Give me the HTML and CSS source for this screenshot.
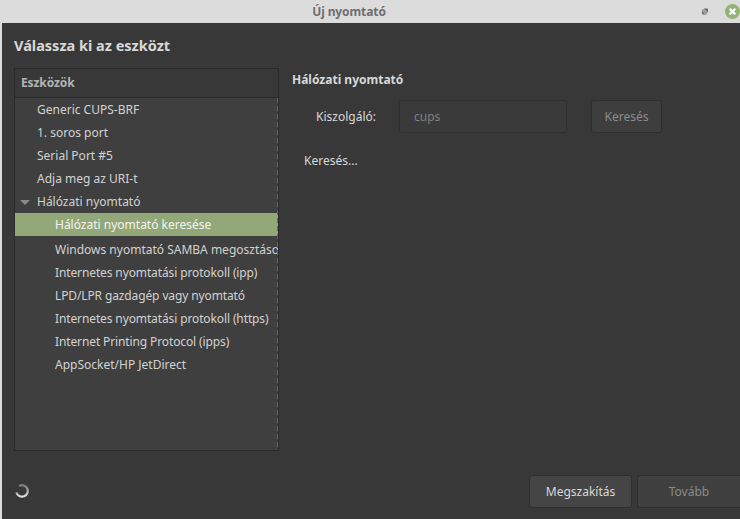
FILE: index.html
```html
<!DOCTYPE html>
<html lang="hu">
<head>
<meta charset="utf-8">
<title>Új nyomtató</title>
<link rel="stylesheet" href="styles.css">
</head>
<body>
<div class="window">
  <header class="titlebar">
    <span class="title">Új nyomtató</span>
    <span class="controls">
      <svg class="restore" width="7" height="7" viewBox="0 0 7 7"><path d="M0 1H3L6 4V7H3L0 4Z" fill="#a0a0a0"/><path d="M2 0H7V5Z M0 3L4 7H0Z" fill="#6e6e6e"/></svg>
      <svg class="close" width="15" height="15" viewBox="0 0 15 15"><circle cx="7.5" cy="7.5" r="7.5" fill="#92b372"/><path d="M4.7 4.7L10.3 10.3M10.3 4.7L4.7 10.3" stroke="#fff" stroke-width="2.2"/></svg>
    </span>
  </header>
  <main class="content">
    <h1 class="heading">Válassza ki az eszközt</h1>
    <div class="columns">
      <section class="panel">
        <div class="panel-head">Eszközök</div>
        <ul class="tree">
          <li class="row">Generic CUPS-BRF</li>
          <li class="row">1. soros port</li>
          <li class="row">Serial Port #5</li>
          <li class="row">Adja meg az URI-t</li>
          <li class="row"><span class="arrow"></span>Hálózati nyomtató</li>
          <li class="row sub selected">Hálózati nyomtató keresése</li>
          <li class="row sub">Windows nyomtató SAMBA megosztáson</li>
          <li class="row sub tight">Internetes nyomtatási protokoll (ipp)</li>
          <li class="row sub tight">LPD/LPR gazdagép vagy nyomtató</li>
          <li class="row sub tight">Internetes nyomtatási protokoll (https)</li>
          <li class="row sub tight">Internet Printing Protocol (ipps)</li>
          <li class="row sub">AppSocket/HP JetDirect</li>
        </ul>
      </section>
      <section class="detail">
        <h2 class="detail-title">Hálózati nyomtató</h2>
        <div class="form">
          <span class="label">Kiszolgáló:</span>
          <span class="input">cups</span>
          <span class="btn search">Keresés</span>
        </div>
        <p class="status">Keresés...</p>
      </section>
    </div>
    <footer class="footer">
      <svg class="spinner" width="14" height="14" viewBox="0 0 14 14"><defs><linearGradient id="g" x1="0" y1="0" x2="0" y2="1"><stop offset="0" stop-color="#777"/><stop offset="1" stop-color="#e0e0e0"/></linearGradient></defs><path d="M4 1.9A5.8 5.8 0 1 1 1.4 8.5" fill="none" stroke="url(#g)" stroke-width="2.2"/></svg>
      <span class="actions">
        <span class="btn cancel">Megszakítás</span>
        <span class="btn next">Tovább</span>
      </span>
    </footer>
  </main>
</div>
</body>
</html>
```
FILE: styles.css
```css
* { box-sizing: border-box; }
html, body { margin: 0; padding: 0; }
body { width: 740px; height: 519px; overflow: hidden; background: #dcdcdc; font-family: "Noto Sans", sans-serif; font-size: 12px; color: #d8d8d8; }
.window { display: flex; flex-direction: column; height: 519px; }
.titlebar { height: 23px; flex: none; display: flex; align-items: center; justify-content: center; padding-right: 42px; background: #dcdcdc; position: relative; }
.title { font-size: 12px; font-weight: 700; color: #6e6e6e; letter-spacing: -0.1px; }
.controls { position: absolute; right: 0; top: 0; height: 23px; width: 40px; display: flex; align-items: center; }
.restore { margin-left: 2px; }
.close { margin-left: 17px; flex: none; }
.content { flex: 1; margin-left: 2px; background: #383838; padding: 0 0 0 12px; display: flex; flex-direction: column; min-height: 0; }
.heading { margin: 12px 0 0; font-size: 14.5px; line-height: 20px; font-weight: 700; color: #d8d8d8; }
.columns { display: flex; margin-top: 13px; height: 383px; flex: none; }
.panel { width: 265px; flex: none; border: 1px solid #2a2a2a; background: #3f3f3f; display: flex; flex-direction: column; }
.panel-head { height: 29px; flex: none; padding: 0 0 2px 6px; display: flex; align-items: center; background: #383838; border-bottom: 1px solid #2a2a2a; font-weight: 700; color: #b4b4b4; letter-spacing: -0.1px; }
.tree { list-style: none; margin: 0; padding: 0; flex: 1; overflow: hidden; position: relative; }
.tree::after { content: ""; position: absolute; right: 0; top: 0; bottom: 0; width: 1px; background: repeating-linear-gradient(to bottom, #666 0, #666 5px, transparent 5px, transparent 8px); }
.row { height: 23px; line-height: 23px; padding-left: 22px; white-space: nowrap; position: relative; color: #d2d2d2; overflow: hidden; }
.row.sub { padding-left: 40px; }
.row.tight { letter-spacing: -0.12px; }
.row.selected { background: #92a878; color: #f4f4f4; margin-bottom: 2px; }
.arrow { position: absolute; left: 5px; top: 10px; width: 0; height: 0; border-left: 5px solid transparent; border-right: 5px solid transparent; border-top: 5px solid #8a8a8a; }
.detail { flex: 1; min-width: 0; padding-left: 13px; }
.detail-title { margin: 3px 0 0; font-size: 12px; line-height: 17px; font-weight: 700; color: #d8d8d8; }
.form { display: flex; align-items: flex-start; margin-top: 12px; padding-left: 24px; }
.label { width: 83px; height: 33px; flex: none; display: flex; align-items: center; color: #d8d8d8; }
.input { width: 168px; height: 33px; flex: none; display: flex; align-items: center; padding-left: 14px; background: #3a3a3a; border: 1px solid #2f2f2f; border-radius: 3px; color: #808080; }
.btn { display: flex; align-items: center; justify-content: center; border-radius: 3px; border: 1px solid #2f2f2f; background: #414141; }
.search { width: 71px; height: 33px; margin-left: 24px; color: #8c8c8c; background: #3e3e3e; }
.status { margin: 19px 0 0 12px; line-height: 17px; color: #d8d8d8; }
.footer { flex: 1; display: flex; align-items: flex-start; justify-content: space-between; padding-top: 24px; }
.spinner { margin: 9px 0 0 1px; }
.actions { display: flex; gap: 5px; }
.cancel { width: 103px; height: 33px; color: #d8d8d8; background: #454545; }
.next { width: 103px; height: 33px; color: #8a8a8a; background: #404040; border-right: 0; border-radius: 3px 0 0 3px; }
```
